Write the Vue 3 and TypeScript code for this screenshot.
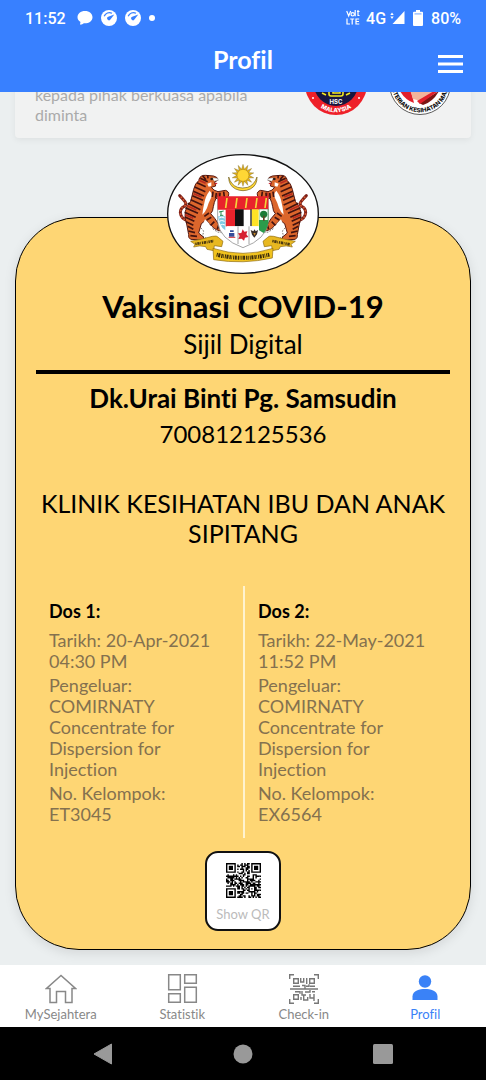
<script setup lang="ts">
interface Dose {
  title: string
  lines: string[]
}

const doses: Dose[] = [
  {
    title: 'Dos 1:',
    lines: [
      'Tarikh: 20-Apr-2021 04:30 PM',
      'Pengeluar: COMIRNATY Concentrate for Dispersion for Injection',
      'No. Kelompok: ET3045',
    ],
  },
  {
    title: 'Dos 2:',
    lines: [
      'Tarikh: 22-May-2021 11:52 PM',
      'Pengeluar: COMIRNATY Concentrate for Dispersion for Injection',
      'No. Kelompok: EX6564',
    ],
  },
]

const SIZE = 25

// Ring-and-dot marker; returns null outside the marker's area.
function marker(x: number, y: number, cx: number, cy: number, reach: number): boolean | null {
  const d = Math.max(Math.abs(x - cx), Math.abs(y - cy))
  if (d > reach) return null
  return reach === 4 ? d <= 1 || d === 3 : d !== 1
}

function qrPath(): string {
  let seed = 4711
  let path = ''
  for (let y = 0; y < SIZE; y++) {
    for (let x = 0; x < SIZE; x++) {
      seed = (seed * 1103515245 + 12345) % 2147483648
      const on =
        marker(x, y, 3, 3, 4) ??
        marker(x, y, SIZE - 4, 3, 4) ??
        marker(x, y, 3, SIZE - 4, 4) ??
        marker(x, y, 18, 18, 2) ??
        seed / 2147483648 > 0.46
      if (on) path += `M${x} ${y}h1v1h-1z`
    }
  }
  return path
}

const qr = qrPath()
const rays = Array.from({ length: 14 }, (_, i) => (i * 360) / 14)
</script>

<template>
  <div class="app">
    <header class="top">
      <div class="status">
        <div class="status-group">
          <span class="clock">11:52</span>
          <svg class="s-icon" viewBox="0 0 16 16"><path d="M8 1C3.600 1 .5 3.700.5 7.200c0 2 1.200 3.700 3 4.800-.2 1-.7 2-.1 2.800 1.300-.2 2.600-.8 3.500-1.500C11.700 13.600 15.500 11 15.500 7.200 15.500 3.700 12.400 1 8 1z" fill="#fff" /></svg>
          <svg v-for="n in 2" :key="n" class="s-icon" viewBox="0 0 16 16">
            <circle cx="8" cy="8" r="8" fill="#fff" />
            <path d="M3.200 6.300A5.500 5.500 0 0 1 11 3.300" fill="none" stroke="#3880ff" stroke-width="1.300" />
            <path d="M13.300 4.600 9.600 9.300A1.800 1.800 0 1 1 7.200 6.800z" fill="#3880ff" />
          </svg>
          <svg class="s-dot" viewBox="0 0 6 6"><circle cx="3" cy="3" r="3" fill="#fff" /></svg>
        </div>
        <div class="status-group right">
          <svg class="volte" viewBox="0 0 14 16" fill="none" stroke="#fff" stroke-width="1.200">
            <path d="M.7 1l2 5 2-5M9.200 0v6.300M11 1.500h2.500M12 0v5.500h1.500M1 8.500V14h3M4.200 9h4M6.200 9v5.600M13.200 9H10v5h3.300M10 11.500h3" />
            <circle cx="6.700" cy="4.300" r="1.700" />
          </svg>
          <span class="net">4G</span>
          <svg class="signal" viewBox="0 0 15 14"><path d="M14.500 0v13H2.500z" fill="#fff" /><path d="M2 1.500 3.700 4H.3zM2 8 .3 5.500h3.400z" fill="#fff" /></svg>
          <svg class="battery" viewBox="0 0 10 16"><path d="M3 0h4v1.700h2q1 0 1 1V15q0 1-1 1H1q-1 0-1-1V2.700q0-1 1-1h2z" fill="#fff" /><path d="M1.500 3.300h7v1.200h-7z" fill="#86b2ff" /></svg>
          <span class="charge">80%</span>
        </div>
      </div>
      <div class="bar">
        <h1>Profil</h1>
        <button class="menu" type="button" aria-label="Menu">
          <svg viewBox="0 0 25 18"><path d="M0 1.500h25M0 9h25M0 16.500h25" stroke="#fff" stroke-width="2.800" /></svg>
        </button>
      </div>
    </header>

    <main class="content">
      <section class="notice">
        <p>kepada pihak berkuasa apabila diminta</p>
        <div class="logos">
          <svg class="logo" viewBox="0 0 62 62">
            <defs><path id="hsc-arc" d="M11 11a28.300 28.300 0 1 0 40 0" /></defs>
            <circle cx="31" cy="31" r="31" fill="#ee2029" />
            <circle cx="31" cy="31" r="22" fill="#18163f" />
            <path d="M24 36v5q0 2 2 2h10q2 0 2-2v-5M28 37v3h7v-3M17 40l4 2M45 40l-4 2" fill="none" stroke="#f3ea20" stroke-width="1.600" />
            <text x="31" y="51" text-anchor="middle" class="hsc">HSC</text>
            <circle cx="8" cy="45" r="1" fill="#fff" /><circle cx="54" cy="45" r="1" fill="#fff" />
            <text class="ring white"><textPath href="#hsc-arc" startOffset="50%" text-anchor="middle">MALAYSIA</textPath></text>
          </svg>
          <svg class="logo" viewBox="0 0 62 62">
            <defs><path id="kkm-arc" d="M11 11a28.300 28.300 0 1 0 40 0" /></defs>
            <circle cx="31" cy="31" r="30.500" fill="#fff" stroke="#333" stroke-width=".8" />
            <path d="M11 38h11l3 12q-9-3-14-12z" fill="#e11f2b" />
            <path d="M20 34h26v5l-14 9-8-2z" fill="#f3b49b" />
            <path d="M50 38 30 50l4 2q10-3 16-14z" fill="#7b1512" /><path d="M45 38 28 48l3 3 17-12z" fill="#e11f2b" />
            <text class="ring dark"><textPath href="#kkm-arc" startOffset="50%" text-anchor="middle">KEMENTERIAN KESIHATAN MALAYSIA</textPath></text>
          </svg>
        </div>
      </section>

      <article class="card">
        <svg class="crest" viewBox="22 26 456 360" role="img" aria-label="Jata Negara Malaysia">
          <defs>
            <g id="tiger">
              <path d="M86 248q-22-4-24-24 0-14 12-19 8-5 2-14-8-10-16-18" transform="translate(0 -22)" fill="none" stroke="#7e2018" stroke-width="9" stroke-linecap="round" />
              <path d="M86 248q-22-4-24-24 0-14 12-19 8-5 2-14-8-10-16-18" transform="translate(0 -22)" fill="none" stroke="#d65a30" stroke-width="5" stroke-dasharray="5 5" />
              <path d="M118 102q4-13 20-12l24 2q13 3 12 12l-9 7 3 11-13 4q6 10 20 13l22-4q12 3 10 14-4 14-18 15l-20-5q-6 12-8 25-1 14-8 21l12 14 12 18q8 9 22 3l-2-11q2-9 12-5 9 9 4 17-9 17-24 16-20 0-32-14l-18-18-14 10-8 28 14 12q6 6-2 9l-36-2q-8-5-6-14l-6-32q-8-18-4-38 4-18 16-30 5-20 9-36 4-18 16-27z" fill="#dc662c" stroke="#571a12" stroke-width="3" />
              <path d="M150 136q10 10 4 22-8 15-12 30-6 14-14 20 2-20 6-35 3-20 16-37zM136 222l14 14-10-1-14 11zM155 111l-12 4 4 9 8-2z" fill="#fff" />
              <path d="M122 99l22 10M112 112l26 12M105 125l32 14M101 138l32 14M98 151l32 14M93 163l35 16M84 174l38 19M77 187l38 17M75 201l33 15M76 215l28 13M79 229l22 11M84 243l17 9M86 257l20 5M92 271l20 2M148 203l-14 10M155 216l-14 8M164 229l-11 11M177 239l-4 13M193 236l4 12M160 139l-2 16M170 143l-2 16M181 142l-1 16M192 139l2 16M129 91l10 12M144 89l1 10" fill="none" stroke="#431310" stroke-width="5" />
              <path d="M118 105l20 9M102 145l24 10M82 181l28 13M77 208l24 11M176 142l-2 14" stroke="#b92c20" stroke-width="5" />
              <path d="M158 97l16 2 2 6-13 3z" fill="#fff" stroke="#333" stroke-width="1" />
              <circle cx="156" cy="101" r="4" fill="#251b18" /><path d="M165 112l9 1-7 6z" fill="#c51e28" />
              <path d="M124 248l8 9-3 15 16 10M159 250l14 10 20 3" fill="none" stroke="#3d342b" stroke-width="2" stroke-dasharray="5 4" />
            </g>
          </defs>
          <ellipse cx="250" cy="206" rx="226" ry="178" fill="#fff" stroke="#111" stroke-width="4" />
          <g>
            <path v-for="a in rays" :key="a" d="M250 57l5 18h-10z" fill="#e3b21c" stroke="#6c5916" stroke-width="1" :transform="`rotate(${a} 250 90)`" />
            <circle cx="250" cy="90" r="18" fill="#ffd735" stroke="#b98e16" stroke-width="2" />
          </g>
          <path d="M207 95q0 26 21 36 22 10 44 0 21-11 20-36-8 24-28 31-15 4-30 0-20-7-27-31z" fill="#ffd735" stroke="#6c5916" stroke-width="2" />
          <use href="#tiger" />
          <use href="#tiger" transform="translate(500 0) scale(-1 1)" />
          <path d="M174 157h152v73q-6 52-76 77-70-25-76-77z" fill="#fff" stroke="#777" stroke-width="2" />
          <path d="M174 153h152v40H174z" fill="#e9232b" />
          <path d="M202 158l-4 30M232 158l-4 30M262 158l-4 30M292 158l-4 30M320 158l-4 30" stroke="#f4d53a" stroke-width="5" />
          <path d="M198 192h28v51h-28z" fill="#e9232b" /><path d="M226 192h26v51h-26z" fill="#111" />
          <path d="M276 192h21v51h-21z" fill="#ffe326" /><path d="M272 192h4v51h-4z" fill="#222" />
          <path d="M298 192h28v40q-4 20-14 31l-14-8z" fill="#2a9b4b" />
          <path d="M299 192h25v32h-25z" fill="#fff" /><circle cx="312" cy="207" r="11" fill="#1b7b37" /><path d="M310 211h5v15h-5z" fill="#624323" />
          <path d="M175 213h22v42q-17-8-22-42z" fill="#80cbe3" /><path d="M178 218q8-5 17 0M178 228q8-5 17 0M182 239q7-4 14 0" stroke="#fff" stroke-width="3" fill="none" />
          <path d="M184 197v13M178 200l14-3M181 210h10" stroke="#248b50" stroke-width="3" />
          <path d="M202 243h94v26q-18 24-46 34-28-10-48-34z" fill="#fff" />
          <path d="M235 243v53M268 243v53" stroke="#777" stroke-width="2" />
          <path d="M208 263h16v11h-16zM211 255h11v5h-11z" fill="#354e9b" /><path d="M207 276h20" stroke="#d1343c" stroke-width="3" />
          <path d="M249 252l5 7 9-1-3 9 6 8-10 2-3 9-7-6-10 1 4-9-5-8 10-1z" fill="#d62131" />
          <path d="M273 254l8 4 4-6 3 6 7-4-3 13-8 10-7-9z" fill="#3c302a" /><path d="M281 263l4 8 3-8z" fill="#cf8e25" />
          <path d="M93 288q34-6 65-15 14-3 18 3l14 12-4 16-22-3-2 15-20-4-4-8q-18-5-36 1l4-8z" fill="#e8b820" stroke="#8d6a12" stroke-width="2" />
          <path d="M407 288q-34-6-65-15-14-3-18 3l-14 12 4 16 22-3 2 15 20-4 4-8q18-5 36 1l-4-8z" fill="#e8b820" stroke="#8d6a12" stroke-width="2" />
          <path d="M160 309q90 30 180 0l-2 29q-88 20-176 5z" fill="#f0c21e" stroke="#8d6a12" stroke-width="2" />
          <path d="M107 296l55-9M338 287l52 10" stroke="#4d3a10" stroke-width="8" stroke-dasharray="4 2 7 2 2 3" />
          <path d="M171 328q80 19 158 0" fill="none" stroke="#3c2c0b" stroke-width="12" stroke-dasharray="3 2 6 3 4 2 2 3" />
        </svg>

        <h2>Vaksinasi COVID-19</h2>
        <p class="sub">Sijil Digital</p>
        <hr />
        <h3>Dk.Urai Binti Pg. Samsudin</h3>
        <p class="ident">700812125536</p>
        <p class="place">KLINIK KESIHATAN IBU DAN ANAK SIPITANG</p>

        <div class="doses">
          <section v-for="dose in doses" :key="dose.title" class="dose">
            <h4>{{ dose.title }}</h4>
            <p v-for="line in dose.lines" :key="line">{{ line }}</p>
          </section>
        </div>

        <button class="qr" type="button">
          <svg viewBox="0 0 25 25" shape-rendering="geometricPrecision"><path :d="qr" fill="#000" /></svg>
          <span>Show QR</span>
        </button>
      </article>
    </main>

    <nav class="tabs">
      <a href="#home">
        <svg viewBox="0 0 32 32" fill="none" stroke="#888" stroke-width="1.500"><path d="M16 2.500 1.500 15.500H5V29.500h6.500v-11h9v11H27v-14h3.500z" /></svg>
        <span>MySejahtera</span>
      </a>
      <a href="#stats">
        <svg viewBox="0 0 32 32" fill="none" stroke="#888" stroke-width="1.500"><path d="M2.700 1.700h11.600v15H2.700zM18.700 1.700h11.600v8.600H18.700zM2.700 20.700h11.600v8.600H2.700zM18.700 14.300h11.600v15H18.700z" /></svg>
        <span>Statistik</span>
      </a>
      <a href="#checkin">
        <svg viewBox="0 0 32 32" fill="none" stroke="#777" stroke-width="1.400"><path d="M1.700 6V1.700H6M26 1.700h4.300V6M1.700 26v4.300H6M26 30.300h4.300V26M2 16h28M5.700 5.700h4.600v4.600H5.700zM21.700 5.700h4.600v4.600h-4.600zM5.700 21.700h4.600v4.600H5.700zM12.700 5v4h3V5M18.700 5v6M5 13.300h7M14 12.500h3v3M18 13.300h3v-2M22 13.300h5M7 18.700h5v2M14 18v4h4M17 19h5v-2M24 18.700h3M13 24v3M15.700 22v5h4v-3M22 21v4h4v-4M26 25v3" /></svg>
        <span>Check-in</span>
      </a>
      <a href="#profile" class="active" aria-current="page">
        <svg viewBox="0 0 32 32" fill="#3a82f7"><circle cx="16" cy="8.500" r="6.200" /><path d="M3.500 27v-3.500C3.500 17.500 11 16 16 16s12.500 1.500 12.500 7.500V27z" /></svg>
        <span>Profil</span>
      </a>
    </nav>

    <footer class="system">
      <button type="button" aria-label="Back"><svg viewBox="0 0 20 22"><path d="M18.500 1v20L1 11z" fill="#999" stroke="#999" stroke-linejoin="round" /></svg></button>
      <button type="button" aria-label="Home"><svg viewBox="0 0 20 22"><circle cx="10" cy="11" r="9.500" fill="#999" /></svg></button>
      <button type="button" aria-label="Recent apps"><svg viewBox="0 0 20 22"><rect y="1" width="20" height="20" rx="1.500" fill="#999" /></svg></button>
    </footer>
  </div>
</template>

<style>
body {
  margin: 0;
}
</style>

<style scoped>
.app {
  display: flex;
  flex-direction: column;
  height: 100vh;
  overflow: hidden;
  background: #ebeff0;
  font-family: Lato, "Open Sans", sans-serif;
  font-variant-ligatures: none;
  color: #000;
}
.app * {
  box-sizing: border-box;
}
h1, h2, h3, h4, p {
  margin: 0;
}
button {
  border: 0;
  padding: 0;
  background: none;
  font: inherit;
  cursor: pointer;
}
svg {
  display: block;
}
.top {
  flex: none;
  background: #3880ff;
  color: #fff;
  z-index: 1;
}
.status {
  display: flex;
  justify-content: space-between;
  align-items: center;
  height: 36px;
  padding: 0 25px;
  font: 500 16px Roboto, sans-serif;
}
.status-group {
  display: flex;
  align-items: center;
  gap: 8px;
}
.status-group.right {
  gap: 4px;
}
.clock {
  margin-right: 3px;
}
.s-icon {
  width: 16px;
  height: 16px;
}
.s-dot {
  width: 6px;
  height: 6px;
}
.volte {
  width: 14px;
  height: 16px;
  margin-right: 2px;
}
.signal {
  width: 15px;
  height: 14px;
}
.battery {
  width: 10px;
  height: 16px;
  margin: 0 4px;
}
.bar {
  display: grid;
  grid-template-columns: 1fr auto 1fr;
  align-items: center;
  height: 56px;
  padding: 0 23px;
}
.bar h1 {
  grid-column: 2;
  font-size: 25px;
  line-height: 30px;
  font-weight: 700;
  padding-bottom: 10px;
}
.menu {
  justify-self: end;
}
.menu svg {
  width: 25px;
  height: 18px;
}
.content {
  flex: 1;
  min-height: 0;
  overflow: hidden;
  padding: 0 15px;
}
.notice {
  display: flex;
  justify-content: space-between;
  align-items: flex-end;
  height: 86px;
  margin-top: -40px;
  padding: 0 20px 13px;
  border-radius: 4px;
  background: #f1f2f2;
  box-shadow: 0 2px 6px rgba(0, 0, 0, 0.06);
}
.notice p {
  width: 220px;
  font-size: 16px;
  line-height: 20px;
  color: #aaa;
}
.logos {
  display: flex;
  gap: 22px;
  padding-bottom: 10px;
}
.logo {
  width: 62px;
  height: 62px;
}
.hsc {
  font: 700 6px Inter, sans-serif;
  fill: #fff;
}
.ring {
  font: 800 6px Inter, sans-serif;
}
.white {
  fill: #fff;
}
.dark {
  fill: #111;
}
.card {
  position: relative;
  display: flex;
  flex-direction: column;
  align-items: center;
  margin-top: 79px;
  padding: 69px 20px 18px;
  border: 1px solid #000;
  border-radius: 64px;
  background: #fed674;
  box-shadow: 0 3px 12px rgba(0, 0, 0, 0.1);
  text-align: center;
}
.crest {
  position: absolute;
  top: -64px;
  left: 50%;
  width: 152px;
  height: 120px;
  margin-left: -76px;
}
.card h2 {
  font-size: 31px;
  line-height: 38px;
  font-weight: 700;
}
.sub {
  font-size: 26px;
  line-height: 38px;
}
.card hr {
  width: 100%;
  height: 4px;
  margin: 7px 0 6px;
  border: 0;
  background: #000;
}
.card h3 {
  font-size: 26px;
  line-height: 36px;
  font-weight: 700;
}
.ident {
  font-size: 24px;
  line-height: 36px;
}
.place {
  margin-top: 36px;
  font-size: 25px;
  line-height: 30px;
}
.doses {
  display: grid;
  grid-template-columns: 1fr 1fr;
  width: 100%;
  margin-top: 38px;
  text-align: left;
}
.dose {
  padding: 13px 17px 10px 13px;
}
.dose + .dose {
  border-left: 2px solid #fff3cf;
}
.dose h4 {
  margin-bottom: 7px;
  font-size: 18px;
  line-height: 24px;
  font-weight: 700;
}
.dose p {
  margin-bottom: 3px;
  font-size: 18px;
  line-height: 21px;
  color: #84714f;
}
.qr {
  display: flex;
  flex-direction: column;
  align-items: center;
  width: 76px;
  height: 80px;
  margin-top: 13px;
  padding-top: 10px;
  border: 2px solid #111;
  border-radius: 13px;
  background: #fff;
}
.qr svg {
  width: 35px;
  height: 35px;
}
.qr span {
  margin-top: 8px;
  font-size: 13px;
  line-height: 16px;
  color: #bbb;
}
.tabs {
  flex: none;
  display: grid;
  grid-template-columns: repeat(4, 1fr);
  height: 62px;
  background: #fff;
  z-index: 1;
}
.tabs a {
  display: flex;
  flex-direction: column;
  align-items: center;
  padding-top: 8px;
  color: #888;
  font-size: 13px;
  line-height: 16px;
  text-decoration: none;
}
.tabs svg {
  width: 32px;
  height: 32px;
}
.tabs span {
  margin-top: 1px;
}
.tabs .active {
  color: #3a82f7;
}
.system {
  flex: none;
  display: flex;
  justify-content: space-between;
  align-items: center;
  height: 53px;
  padding: 0 93px;
  background: #000;
}
.system svg {
  width: 20px;
  height: 22px;
}
</style>
